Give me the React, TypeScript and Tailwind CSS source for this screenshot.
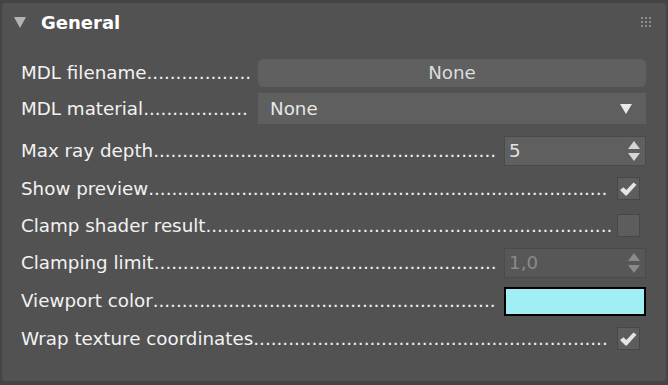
import React from "react";

const font = { fontFamily: '"DejaVu Sans", Tahoma, sans-serif' };

// Label with dot leader that runs up to the control
const Label = ({ text, dots, gap }: { text: string; dots: number; gap: string }) => (
  <div className={`flex min-w-0 flex-1 items-center overflow-hidden whitespace-nowrap ${gap}`}>
    <span className="shrink-0">{text}</span>
    <span className="shrink-0">{".".repeat(dots)}</span>
  </div>
);

const Check = () => (
  <svg width="17" height="14" viewBox="0 0 17 14">
    <path d="M0 8 L3.5 5.2 L6.3 8 L13.5 0.5 L16.5 2.8 L6.8 13.5 L5.5 13.5 Z" fill="#e4e4e4" />
  </svg>
);

const Checkbox = ({ checked }: { checked?: boolean }) => (
  <div className="mr-[6px] flex h-[23px] w-[23px] items-center justify-center border border-[#474747] bg-[#5d5d5d]">
    {checked && <Check />}
  </div>
);

const Spinner = ({ value, disabled }: { value: string; disabled?: boolean }) => (
  <div
    className={`flex h-[30px] w-[142px] items-center justify-between border border-[#4a4a4a] pl-[4px] pr-[5px] ${
      disabled ? "bg-[#575757] text-[#8a8a8a]" : "bg-[#5f5f5f] text-[#e2e2e2]"
    }`}
  >
    <span>{value}</span>
    <svg width="12" height="21" viewBox="0 0 12 21">
      <polygon points="6,0 12,8 0,8" fill={disabled ? "#8a8a8a" : "#d6d6d6"} />
      <polygon points="0,12 12,12 6,20" fill={disabled ? "#8a8a8a" : "#d6d6d6"} />
    </svg>
  </div>
);

const Grip = () => (
  <div className="grid grid-cols-3 gap-[2px]">
    {Array.from({ length: 9 }).map((_, i) => (
      <div key={i} className="h-[2px] w-[2px] bg-[#8c8c8c]" />
    ))}
  </div>
);

export default function App() {
  return (
    <div className="h-[385px] w-[668px] bg-[#444444] pl-[2px] pt-[3px] text-[18.3px] text-[#f2f2f2]" style={font}>
      <div className="h-[378px] w-[664px] rounded-[4px] bg-[#525252]">
        {/* Header */}
        <div className="flex h-[38px] items-center pl-[12px] pr-[15px]">
          <svg width="12" height="11" viewBox="0 0 12 11">
            <polygon points="0,0 12,0 6,11" fill="#b4b4b4" />
          </svg>
          <span className="ml-[15px] flex-1 text-[18px] font-bold text-white">General</span>
          <Grip />
        </div>

        <div className="mt-[14px] flex flex-col pl-[19px] pr-[20px]">
          <div className="flex h-[36px] items-center">
            <Label text="MDL filename" dots={18} gap="mr-[8px]" />
            <div className="flex h-[28px] w-[388px] items-center justify-center rounded-[5px] bg-[#606060] text-[#dcdcdc]">
              None
            </div>
          </div>

          <div className="flex h-[35px] items-center">
            <Label text="MDL material" dots={18} gap="mr-[8px]" />
            <div className="flex h-[31px] w-[388px] items-center justify-between bg-[#5f5f5f] pl-[12px] pr-[14px] text-[#e6e6e6]">
              <span>None</span>
              <svg width="12" height="10" viewBox="0 0 12 10">
                <polygon points="0,0 12,0 6,10" fill="#eaeaea" />
              </svg>
            </div>
          </div>

          <div className="mt-[6px] flex h-[38px] items-center">
            <Label text="Max ray depth" dots={59} gap="mr-[8px]" />
            <Spinner value="5" />
          </div>

          <div className="flex h-[37px] items-center">
            <Label text="Show preview" dots={79} gap="mr-[6px]" />
            <Checkbox checked />
          </div>

          <div className="flex h-[37px] items-center">
            <Label text="Clamp shader result" dots={70} gap="mr-[6px]" />
            <Checkbox />
          </div>

          <div className="flex h-[38px] items-center">
            <Label text="Clamping limit" dots={59} gap="mr-[8px]" />
            <Spinner value="1,0" disabled />
          </div>

          <div className="flex h-[38px] items-center">
            <Label text="Viewport color" dots={59} gap="mr-[8px]" />
            <div className="h-[29px] w-[142px] border-2 border-black bg-[#a0eff5]" />
          </div>

          <div className="flex h-[37px] items-center">
            <Label text="Wrap texture coordinates" dots={61} gap="mr-[6px]" />
            <Checkbox checked />
          </div>
        </div>
      </div>
    </div>
  );
}
